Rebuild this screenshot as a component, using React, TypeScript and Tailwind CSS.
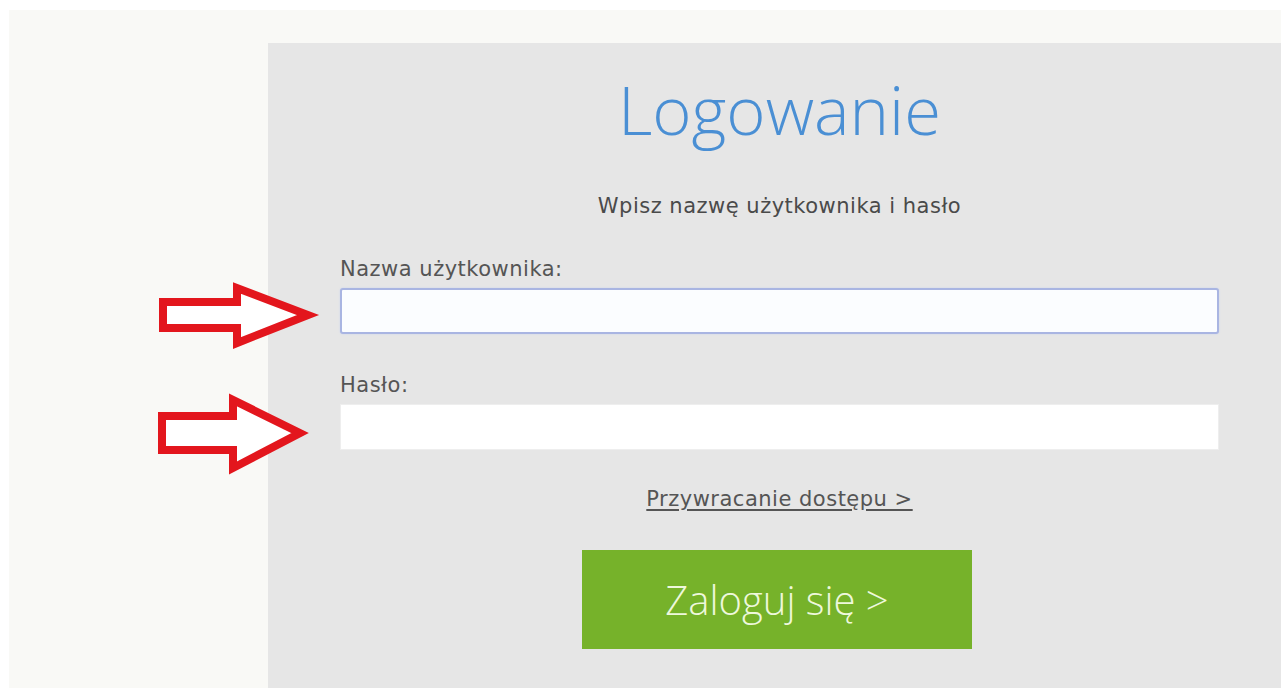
import React from "react";

function RightArrow({ points, className }: { points: string; className: string }) {
  return (
    <svg className={className} width="1281" height="688" viewBox="0 0 1281 688">
      <polygon
        points={points}
        fill="#ffffff"
        stroke="#e3161d"
        strokeWidth="8"
        strokeLinejoin="miter"
      />
    </svg>
  );
}

export default function App() {
  return (
    <div className="relative w-[1281px] h-[688px] overflow-hidden bg-white pt-[10px] pl-[9px]">
      <div className="h-full bg-[#f9f9f6] pt-[33px] pl-[259px]">
        <div className="h-full w-[1030px] bg-[#e6e6e6] pl-[72px]">
          <div className="w-[879px] flex flex-col">
            <h1
              className="mt-[33px] text-center text-[67px] leading-none font-light text-[#4a8fd4]"
              style={{ fontFamily: '"Open Sans", sans-serif' }}
            >
              Logowanie
            </h1>
            <div
              style={{ fontFamily: '"DejaVu Sans", Verdana, sans-serif' }}
              className="flex flex-col text-[21px] leading-[24px] tracking-[0.5px]"
            >
              <p className="mt-[51px] text-center text-[#4a4a4a]">Wpisz nazwę użytkownika i hasło</p>
              <label className="mt-[39px] text-[#555]">Nazwa użytkownika:</label>
              <input
                type="text"
                className="mt-[7px] h-[46px] w-[879px] rounded-[3px] border-2 border-[#a9b5e2] bg-[#fbfdff] outline-none shadow-[0_0_2px_#c9d3f0]"
              />
              <label className="mt-[39px] text-[#555]">Hasło:</label>
              <input
                type="password"
                className="mt-[7px] h-[46px] w-[879px] border border-[#eeeeee] bg-white outline-none"
              />
              <div className="mt-[37px] flex justify-center">
                <a href="#" className="text-[#555] underline underline-offset-[3px]">
                  Przywracanie dostępu &gt;
                </a>
              </div>
            </div>
            <div className="mt-[39px] flex justify-center pr-[5px]">
              <button
                type="button"
                className="h-[99px] w-[390px] bg-[#76b22a] text-[40px] font-light text-[#eef8dc]"
                style={{ fontFamily: '"Open Sans", sans-serif' }}
              >
                Zaloguj się &gt;
              </button>
            </div>
          </div>
        </div>
      </div>
      <RightArrow
        className="absolute left-0 top-0 pointer-events-none"
        points="163,302 237,302 237,288 308,315 237,343 237,328 163,328"
      />
      <RightArrow
        className="absolute left-0 top-0 pointer-events-none"
        points="162,416 233,416 233,400 300,433 233,468 233,450 162,450"
      />
    </div>
  );
}
